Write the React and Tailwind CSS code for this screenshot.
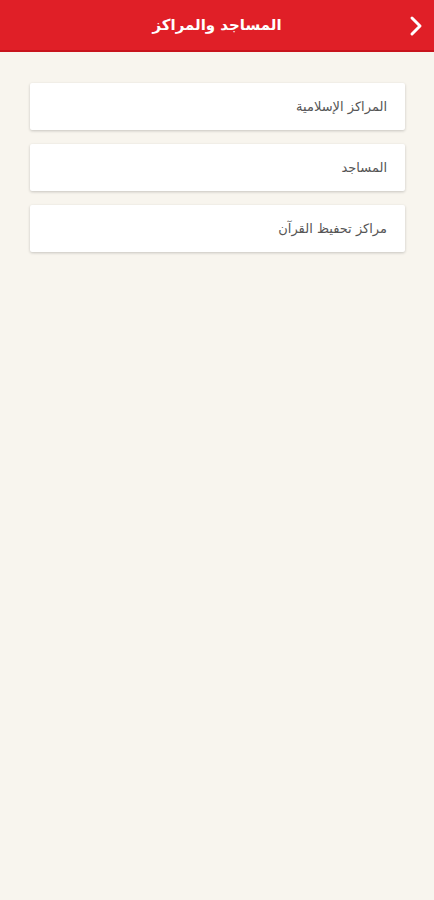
import React from 'react'

const items = ['المراكز الإسلامية', 'المساجد', 'مراكز تحفيظ القرآن']

export default function App() {
  return (
    <div
      dir="rtl"
      className="min-h-[900px] w-full bg-[#f8f5ee]"
      style={{ fontFamily: '"DejaVu Sans", "Noto Sans", sans-serif' }}
    >
      <header className="relative flex h-[52px] items-center justify-center bg-[#e01f27] border-b-2 border-[#c8141c]">
        <h1 className="text-[15px] font-bold text-white">المساجد والمراكز</h1>
        <button className="absolute right-[6px] top-[14px] flex h-[24px] w-[24px] items-center justify-center">
          <svg width="16" height="22" viewBox="0 0 16 22" fill="none">
            <path d="M4 3l8 8-8 8" stroke="#fff" strokeWidth="3" strokeLinecap="round" strokeLinejoin="round" />
          </svg>
        </button>
      </header>

      <div className="flex flex-col gap-[14px] pl-[30px] pr-[29px] pt-[31px]">
        {items.map((t) => (
          <div
            key={t}
            className="flex h-[47px] items-center rounded-[2px] bg-white pr-[18px] shadow-[0_1px_3px_rgba(0,0,0,0.2)]"
          >
            <span className="text-[13px] text-[#555]">{t}</span>
          </div>
        ))}
      </div>
    </div>
  )
}
